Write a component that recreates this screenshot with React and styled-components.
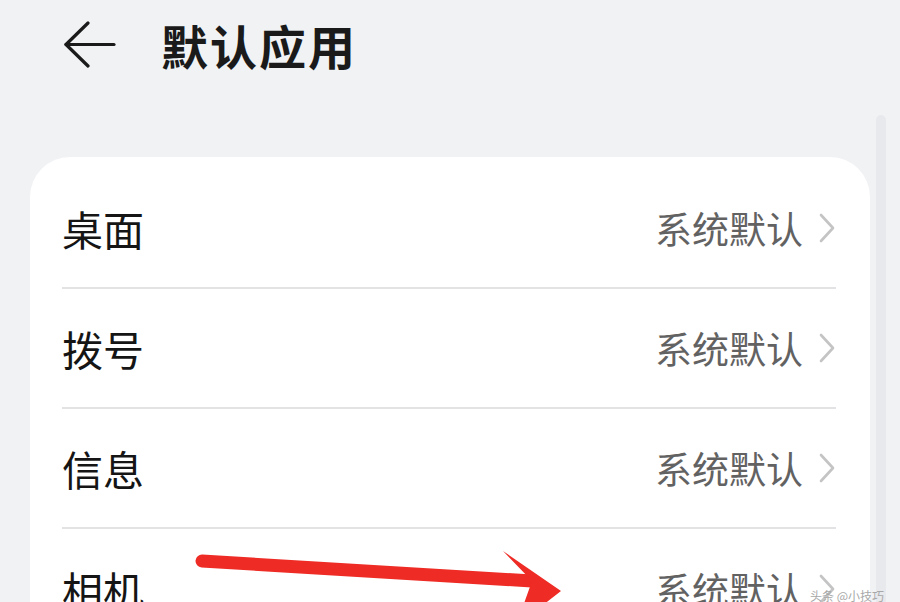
import styled, { createGlobalStyle } from 'styled-components';

const GlobalStyle = createGlobalStyle`
    html, body {
        margin: 0;
        padding: 0;
        background: #f1f2f4;
        overflow: hidden;
    }
    body {
        font-family: "Noto Sans CJK SC", "Noto Sans", sans-serif;
    }
`;

const rows = ['桌面', '拨号', '信息', '相机'];

const BackIcon = () => (
    <svg width="52" height="48" viewBox="0 0 52 48" fill="none" stroke="#1a1a1a" strokeWidth="3.2" strokeLinecap="round" strokeLinejoin="round">
        <path d="M24 2 L2 23.5 L24 45" />
        <path d="M2 23.5 L50 23.5" />
    </svg>
);

const Chevron = () => (
    <svg width="18" height="30" viewBox="0 0 18 30" fill="none" stroke="#c4c4c4" strokeWidth="2.6" strokeLinecap="round" strokeLinejoin="round">
        <path d="M3 2 L15 15 L3 28" />
    </svg>
);

const App = () => {
    return (
        <Page>
            <GlobalStyle />
            <Main>
                <Header>
                    <BackIcon />
                    <Title>默认应用</Title>
                </Header>
                <Card>
                    {rows.map((label, i) => (
                        <Row key={label} $last={i === rows.length - 1}>
                            <Label>{label}</Label>
                            <Value>
                                系统默认
                                <Chevron />
                            </Value>
                        </Row>
                    ))}
                </Card>
            </Main>
            <Track />
            <Arrow width="380" height="60" viewBox="0 0 380 60">
                <path d="M10 10 L340 30" stroke="#ee2b24" strokeWidth="13" strokeLinecap="round" />
                <path d="M311 0 L369 40 L324 75 L340 30 Z" fill="#ee2b24" />
            </Arrow>
            <Watermark>头条 @小技巧</Watermark>
        </Page>
    );
};

const Page = styled.div`
    position: relative;
    width: 900px;
    height: 602px;
    display: flex;
    align-items: flex-start;
    overflow: hidden;
    background: #f1f2f4;
`;

const Main = styled.div`
    flex-shrink: 0;
    width: 840px;
    margin-left: 30px;
    display: flex;
    flex-direction: column;
`;

const Header = styled.div`
    flex-shrink: 0;
    height: 94px;
    display: flex;
    align-items: center;
    gap: 45px;
    padding-left: 34px;
    svg {
        margin-top: -4px;
    }
`;

const Title = styled.h1`
    margin: 0;
    font-size: 47px;
    font-weight: 700;
    color: #1a1a1a;
    letter-spacing: 2px;
    line-height: 1;
    margin-top: -6px;
`;

const Card = styled.div`
    flex-shrink: 0;
    margin-top: 63px;
    background: #ffffff;
    border-radius: 40px;
    padding: 12px 34px 0 32px;
    height: 600px;
`;

const Row = styled.div`
    height: 120px;
    display: flex;
    align-items: center;
    justify-content: space-between;
    border-bottom: ${p => (p.$last ? 'none' : '2px solid #e3e3e5')};
    box-sizing: border-box;
`;

const Label = styled.span`
    font-size: 41px;
    color: #151515;
    line-height: 1;
`;

const Value = styled.span`
    display: flex;
    align-items: center;
    gap: 15px;
    font-size: 37px;
    color: #626262;
    line-height: 1;
`;

const Track = styled.div`
    flex-shrink: 0;
    width: 10px;
    height: 500px;
    margin-left: 6px;
    margin-top: 115px;
    background: #e7e9ec;
    border-radius: 5px 5px 0 0;
`;

const Arrow = styled.svg`
    position: absolute;
    left: 192px;
    top: 551px;
    overflow: visible;
`;

const Watermark = styled.span`
    position: absolute;
    right: 16px;
    bottom: 0;
    font-size: 12px;
    line-height: 12px;
    color: #a8a8a8;
`;

export default App;
